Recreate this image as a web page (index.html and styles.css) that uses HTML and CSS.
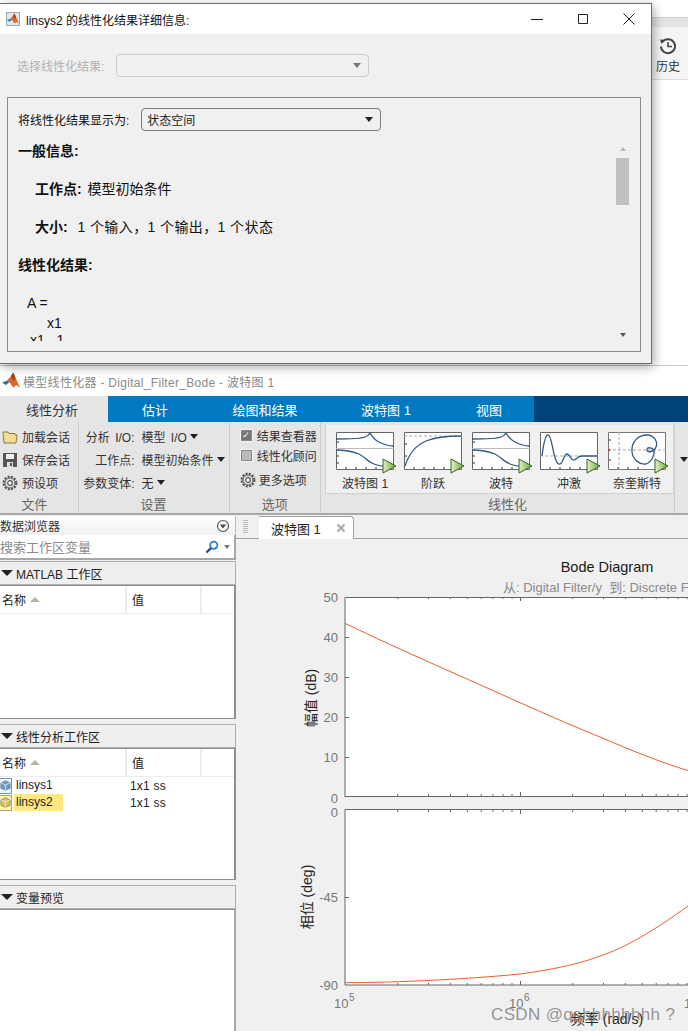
FILE: index.html
```html
<!DOCTYPE html>
<html>
<head>
    <meta charset="UTF-8">
    <title>模型线性化器</title>
    <link rel="stylesheet" href="styles.css">
</head>
<body>
    <svg class="sprite" width="0" height="0">
        <defs>
            <linearGradient id="playFill" x1="0" y1="0" x2="1" y2="0">
                <stop offset="0" stop-color="#e4efc8"/>
                <stop offset="1" stop-color="#6fa52f"/>
            </linearGradient>
            <symbol id="matlab" viewBox="0 0 16 16">
                <path d="M0 9.5 4.5 7.5 6.5 9 3.5 11.5Z" fill="#2f6fa8"/>
                <path d="M4.5 7.5 8 3.5 10 0.5 12 5 16 14 12.5 11.5 10 14 7 9.5 6.5 9Z" fill="#d9662a"/>
                <path d="M8 3.5 10 0.5 12 5 10 8Z" fill="#a63f14"/>
            </symbol>
            <symbol id="gear" viewBox="0 0 16 16">
                <circle cx="8" cy="8" r="6.2" fill="none" stroke="#555" stroke-width="2.4" stroke-dasharray="2 1.25"/>
                <circle cx="8" cy="8" r="5" fill="#e0e0e0" stroke="#666" stroke-width="1"/>
                <circle cx="8" cy="8" r="2.3" fill="#fff" stroke="#555" stroke-width="1.2"/>
            </symbol>
            <symbol id="play" viewBox="0 0 15 16">
                <path d="M1 1 14 8 1 15Z" fill="url(#playFill)" stroke="#35662a" stroke-width="1"/>
            </symbol>
            <symbol id="cube" viewBox="0 0 12 12">
                <path d="M6 1 11 3.2V9L6 11 1 9V3.2Z" fill="currentColor" stroke="#666" stroke-width=".7"/>
                <path d="M1 3.2 6 5.4 11 3.2M6 5.4V11" fill="none" stroke="#fff" stroke-width=".7"/>
            </symbol>
            <symbol id="bodeThumb" viewBox="0 0 58 38">
                <path d="M.5.5H57.5V37.5H.5Z" fill="#fff" stroke="#666"/>
                <path d="M0 16.5H58" stroke="#bbb"/>
                <path d="M0 7C12 7 24 7 29 5 32 4 33 2 34 1 36 4 38 8 43 10 47 12 52 14 57 14" fill="none" stroke="#34597f" stroke-width="1.3"/>
                <path d="M0 18C10 18 18 20 23 22 29 25 32 30 38 32 43 34 48 35 57 35" fill="none" stroke="#34597f" stroke-width="1.3"/>
                <path d="M.5 24H3M.5 31H3M.5 10H3M10 37V35M20 37V35M30 37V35M40 37V35M50 37V35" stroke="#333"/>
            </symbol>
            <symbol id="stepThumb" viewBox="0 0 58 38">
                <path d="M.5.5H57.5V37.5H.5Z" fill="#fff" stroke="#666"/>
                <path d="M0 4H58" stroke="#aaa" stroke-dasharray="3 2"/>
                <path d="M1 34C5 22 12 13 22 9 32 5 44 4 57 4" fill="none" stroke="#34597f" stroke-width="1.3"/>
                <path d="M.5 12H3M.5 24H3M10 37V35M20 37V35M30 37V35M40 37V35M50 37V35" stroke="#333"/>
            </symbol>
            <symbol id="impulseThumb" viewBox="0 0 58 38">
                <path d="M.5.5H57.5V37.5H.5Z" fill="#fff" stroke="#666"/>
                <path d="M0 24H58" stroke="#aaa" stroke-dasharray="3 2"/>
                <path d="M2 24C4 8 6 3 8 3 11 3 12 14 14 22 16 30 18 33 20 32 23 31 24 22 27 22 30 22 31 29 34 28 37 27 38 24 42 24H57" fill="none" stroke="#34597f" stroke-width="1.3"/>
                <path d="M10 37V35M20 37V35M30 37V35M40 37V35M50 37V35" stroke="#333"/>
            </symbol>
            <symbol id="nyquistThumb" viewBox="0 0 58 38">
                <rect x=".5" y=".5" width="57" height="37" fill="#fff"/>
                <path d="M.5 37.5V.5H57.5V37.5H.5" fill="none" stroke="#777"/>
                <path d="M0 18H58M11 0V38" stroke="#aaa" stroke-dasharray="3 2"/>
                <path d="M0 18H2" stroke="#e22" stroke-width="2"/>
                <path d="M38 32C32 33 25 28 24 20 23 9 31 3 39 3 47 3 50 11 48 15 46 20 40 21 39 18 38 15 44 15 46 18 47 22 44 30 38 32Z" fill="none" stroke="#34597f" stroke-width="1.3"/>
                <path d="M.5 8H3M.5 28H3M10 37V35M20 37V35M30 37V35" stroke="#333"/>
            </symbol>
        </defs>
    </svg>

    <!-- window behind the dialog -->
    <div class="back-window">
        <div class="back-strip">
            <div class="history">
                <svg class="history-icon" viewBox="0 0 18 18">
                    <path d="M3.4 5A7 7 0 1 1 2 9.5" fill="none" stroke="#444" stroke-width="2"/>
                    <path d="M1 2.5 6 3 2.5 7Z" fill="#444"/>
                    <path d="M9 5V9.5H13" fill="none" stroke="#444" stroke-width="1.6"/>
                </svg>
                <span>历史</span>
            </div>
        </div>
    </div>

    <div class="model-window">
        <div class="app-title">
            <svg class="app-logo"><use href="#matlab"/></svg>
            <span>模型线性化器 - Digital_Filter_Bode - 波特图 1</span>
        </div>

        <div class="tabs">
            <div class="tab active tab-a">线性分析</div>
            <div class="tab tab-b">估计</div>
            <div class="tab tab-c">绘图和结果</div>
            <div class="tab tab-d">波特图 1</div>
            <div class="tab tab-e">视图</div>
            <div class="tab-rest"></div>
        </div>

        <div class="ribbon">
            <div class="section sec-file">
                <div class="section-body file-list">
                    <div class="cmd">
                        <svg class="cmd-icon" viewBox="0 0 16 16"><path d="M1 3H6L7 4.5H13V6H15L14 14H2L1 3Z" fill="#f3dc93" stroke="#8a7a45"/></svg>
                        加载会话
                    </div>
                    <div class="cmd">
                        <svg class="cmd-icon" viewBox="0 0 16 16"><path d="M1 1H15V15H1Z" fill="#555"/><path d="M4 2H12V7H4Z" fill="#eee"/><path d="M5 10H11V15H5Z" fill="#ddd"/><path d="M8 11H10V14H8Z" fill="#555"/></svg>
                        保存会话
                    </div>
                    <div class="cmd">
                        <svg class="cmd-icon"><use href="#gear"/></svg>
                        预设项
                    </div>
                </div>
                <div class="section-label label-file">文件</div>
            </div>

            <div class="section sec-setup">
                <div class="section-body setup-grid">
                    <span class="setup-key">分析 I/O:</span><span class="drop">模型 I/O<i class="caret"></i></span>
                    <span class="setup-key">工作点:</span><span class="drop">模型初始条件<i class="caret"></i></span>
                    <span class="setup-key">参数变体:</span><span class="drop">无<i class="caret"></i></span>
                </div>
                <div class="section-label">设置</div>
            </div>

            <div class="section sec-options">
                <div class="section-body option-list">
                    <div class="cmd"><span class="check on">✓</span>结果查看器</div>
                    <div class="cmd"><span class="check"></span>线性化顾问</div>
                    <div class="cmd cmd-more"><svg class="cmd-icon"><use href="#gear"/></svg>更多选项</div>
                </div>
                <div class="section-label">选项</div>
            </div>

            <div class="section sec-linear">
                <div class="gallery">
                    <div class="thumb"><div class="thumb-pic"><svg class="thumb-svg"><use href="#bodeThumb"/></svg><svg class="thumb-play"><use href="#play"/></svg></div><span>波特图 1</span></div>
                    <div class="thumb"><div class="thumb-pic"><svg class="thumb-svg"><use href="#stepThumb"/></svg><svg class="thumb-play"><use href="#play"/></svg></div><span>阶跃</span></div>
                    <div class="thumb"><div class="thumb-pic"><svg class="thumb-svg"><use href="#bodeThumb"/></svg><svg class="thumb-play"><use href="#play"/></svg></div><span>波特</span></div>
                    <div class="thumb"><div class="thumb-pic"><svg class="thumb-svg"><use href="#impulseThumb"/></svg><svg class="thumb-play"><use href="#play"/></svg></div><span>冲激</span></div>
                    <div class="thumb"><div class="thumb-pic"><svg class="thumb-svg"><use href="#nyquistThumb"/></svg><svg class="thumb-play"><use href="#play"/></svg></div><span>奈奎斯特</span></div>
                </div>
                <div class="section-label label-linear">线性化</div>
            </div>

            <div class="section sec-more">
                <div class="more-body"><i class="caret"></i></div>
            </div>
        </div>

        <div class="workspace">
            <div class="browser">
                <div class="browser-title">
                    <span>数据浏览器</span>
                    <svg class="circle-down" viewBox="0 0 14 14"><circle cx="7" cy="7" r="5.5" fill="#fafafa" stroke="#555" stroke-width="1.2"/><path d="M3.8 5.5H10.2L7 9.5Z" fill="#444"/></svg>
                </div>
                <div class="search">
                    <span>搜索工作区变量</span>
                    <svg class="search-icon" viewBox="0 0 14 14"><circle cx="8.8" cy="5.2" r="3.6" fill="#fff" stroke="#2a7fd0" stroke-width="1.8"/><path d="M6 8 1.5 12.5" stroke="#1c4f9c" stroke-width="2.4"/></svg>
                    <i class="caret caret-gray"></i>
                </div>

                <div class="panel-head"><i class="caret caret-big"></i>MATLAB 工作区</div>
                <div class="table table-one">
                    <div class="table-head">
                        <div class="col-name">名称<i class="sort-up"></i></div>
                        <div class="col-value">值</div>
                        <div class="col-blank"></div>
                    </div>
                </div>

                <div class="panel-head panel-gap"><i class="caret caret-big"></i>线性分析工作区</div>
                <div class="table table-two">
                    <div class="table-head">
                        <div class="col-name">名称<i class="sort-up"></i></div>
                        <div class="col-value">值</div>
                        <div class="col-blank"></div>
                    </div>
                    <div class="table-row">
                        <span class="var-icon var-blue"><svg><use href="#cube"/></svg></span>
                        <span class="var-name">linsys1</span>
                        <span class="var-value">1x1 ss</span>
                    </div>
                    <div class="table-row">
                        <span class="var-icon var-yellow"><svg><use href="#cube"/></svg></span>
                        <span class="var-name selected">linsys2</span>
                        <span class="var-value">1x1 ss</span>
                    </div>
                </div>

                <div class="panel-head panel-gap"><i class="caret caret-big"></i>变量预览</div>
                <div class="preview"></div>
            </div>

            <div class="document">
                <div class="doc-tabs">
                    <div class="grip"></div>
                    <div class="doc-tab">
                        <span>波特图 1</span>
                        <svg class="doc-close" viewBox="0 0 10 10"><path d="M1.5 1.5 8.5 8.5M8.5 1.5 1.5 8.5" stroke="#aaa" stroke-width="2.2"/></svg>
                    </div>
                </div>

                <svg class="plot" viewBox="236 539 452 492">
                    <text class="plot-title" x="607" y="572" text-anchor="middle">Bode Diagram</text>
                    <text class="plot-sub" x="503" y="592">从: Digital Filter/y  到: Discrete Filter</text>

                    <rect x="345" y="597.5" width="350" height="199" fill="#fff"/>
                    <path d="M345 797V597.5H695M345 796.5H695" fill="none" stroke="#666"/>
                    <path d="M345 637.5H349M345 677.5H349M345 717.5H349M345 757.5H349" stroke="#666"/>
                    <path d="M397.7 597V599M428.5 597V599M450.4 597V599M467.3 597V599M481.2 597V599M492.9 597V599M503 597V599M512 597V599M520.5 597V601M572.7 597V599M603.5 597V599M625.4 597V599M642.3 597V599M656.2 597V599M667.9 597V599M678 597V599M687 597V599" stroke="#666"/>
                    <path d="M397.7 796V794M428.5 796V794M450.4 796V794M467.3 796V794M481.2 796V794M492.9 796V794M503 796V794M512 796V794M520.5 796V792M572.7 796V794M603.5 796V794M625.4 796V794M642.3 796V794M656.2 796V794M667.9 796V794M678 796V794M687 796V794" stroke="#666"/>
                    <path d="M345 623.3C400 650 470 680 520 702.7 550 716 580 729 600 737 630 750 660 762 688 770.6" fill="none" stroke="#e8602c" stroke-width="1"/>
                    <text class="tick" x="338" y="602" text-anchor="end">50</text>
                    <text class="tick" x="338" y="642" text-anchor="end">40</text>
                    <text class="tick" x="338" y="682" text-anchor="end">30</text>
                    <text class="tick" x="338" y="722" text-anchor="end">20</text>
                    <text class="tick" x="338" y="762" text-anchor="end">10</text>
                    <text class="tick" x="338" y="803" text-anchor="end">0</text>
                    <text class="axis-label" transform="translate(316 698) rotate(-90)" text-anchor="middle">幅值 (dB)</text>

                    <rect x="345" y="810" width="350" height="175" fill="#fff"/>
                    <path d="M345 985V809.5H695M345 985H695" fill="none" stroke="#666" stroke-width="1"/>
                    <path d="M345 897.5H349" stroke="#666"/>
                    <path d="M397.7 810V812M428.5 810V812M450.4 810V812M467.3 810V812M481.2 810V812M492.9 810V812M503 810V812M512 810V812M520.5 810V814M572.7 810V812M603.5 810V812M625.4 810V812M642.3 810V812M656.2 810V812M667.9 810V812M678 810V812M687 810V812" stroke="#666"/>
                    <path d="M397.7 985V983M428.5 985V983M450.4 985V983M467.3 985V983M481.2 985V983M492.9 985V983M503 985V983M512 985V983M520.5 985V981M572.7 985V983M603.5 985V983M625.4 985V983M642.3 985V983M656.2 985V983M667.9 985V983M678 985V983M687 985V983" stroke="#666"/>
                    <path d="M345 982.7C400 982.5 470 979 520 974 550 970 580 964 600 956 625 948 655 930 688 906" fill="none" stroke="#e8602c" stroke-width="1"/>
                    <text class="tick" x="338" y="817" text-anchor="end">0</text>
                    <text class="tick" x="338" y="902" text-anchor="end">-45</text>
                    <text class="tick" x="338" y="990" text-anchor="end">-90</text>
                    <text class="axis-label" transform="translate(312 897) rotate(-90)" text-anchor="middle">相位 (deg)</text>

                    <text class="tick" x="334" y="1008">10</text><text class="tick-exp" x="349" y="1001">5</text>
                    <text class="tick" x="509" y="1008">10</text><text class="tick-exp" x="524" y="1001">6</text>
                    <text class="tick" x="684" y="1008">10</text>
                    <text class="axis-label" x="607" y="1024" text-anchor="middle">频率 (rad/s)</text>
                </svg>
            </div>
        </div>
    </div>

    <div class="watermark">CSDN @qshhhhhhhh ?</div>

    <!-- details dialog on top -->
    <div class="dialog">
        <div class="dialog-title">
            <span class="dialog-logo"><svg><use href="#matlab"/></svg></span>
            <span class="dialog-name">linsys2 的线性化结果详细信息:</span>
            <svg class="win-btn" viewBox="0 0 12 12"><path d="M0 6.5H12" stroke="#222"/></svg>
            <svg class="win-btn" viewBox="0 0 12 12"><path d="M1.5 1.5H10.5V10.5H1.5Z" fill="none" stroke="#222"/></svg>
            <svg class="win-btn win-close" viewBox="0 0 12 12"><path d="M.5.5 11.5 11.5M11.5.5.5 11.5" stroke="#222"/></svg>
        </div>
        <div class="dialog-body">
            <div class="result-row">
                <span class="result-label">选择线性化结果:</span>
                <div class="combo combo-off"><i class="caret caret-gray"></i></div>
            </div>
            <div class="group">
                <div class="display-row">
                    <span>将线性化结果显示为:</span>
                    <div class="combo combo-on"><span>状态空间</span><i class="caret"></i></div>
                </div>
                <div class="details">
                    <div class="line"><b>一般信息:</b></div>
                    <div class="line indent"><b>工作点:</b> <span class="point-text">模型初始条件</span></div>
                    <div class="line indent"><b>大小:</b>&nbsp; <span class="size-text">1 个输入，1 个输出，1 个状态</span></div>
                    <div class="line"><b>线性化结果:</b></div>
                    <div class="line code-a">A =</div>
                    <div class="code code-x">x1</div>
                    <div class="code code-y">x1&nbsp;&nbsp;&nbsp;1</div>
                </div>
                <div class="scroll">
                    <i class="scroll-up"></i>
                    <div class="scroll-thumb"></div>
                    <i class="scroll-down"></i>
                </div>
            </div>
        </div>
    </div>
</body>
</html>
```

FILE: styles.css
```css
html, body {
    margin: 0;
    height: 100%;
}

body {
    position: relative;
    width: 688px;
    height: 1031px;
    overflow: hidden;
    background: #fff;
    color: #222;
    font-family: "Liberation Sans", "Noto Sans CJK SC", sans-serif;
    font-size: 12px;
}

.sprite {
    position: absolute;
}

.caret {
    display: inline-block;
    width: 0;
    height: 0;
    border-left: 4px solid transparent;
    border-right: 4px solid transparent;
    border-top: 5px solid #222;
}

.caret-gray {
    border-top-color: #777;
}

.caret-big {
    border-left-width: 6px;
    border-right-width: 6px;
    border-top-width: 6px;
    margin: 0 3px 0 1px;
}

/* back window */
.back-window {
    height: 366px;
    padding-top: 17px;
    border-bottom: 1px solid #c8c8c8;
    box-sizing: border-box;
}

.back-strip {
    height: 63px;
    box-sizing: border-box;
    padding-top: 9px;
    display: flex;
    justify-content: flex-end;
    background: linear-gradient(#e4e4e4 0, #e4e4e4 9px, #f5f5f5 9px);
    border-top: 1px solid #d0d0d0;
    border-bottom: 1px solid #dcdcdc;
}

.history {
    width: 36px;
    padding-right: 4px;
    box-sizing: border-box;
    display: flex;
    flex-direction: column;
    align-items: center;
    gap: 2px;
    color: #333;
}

.history-icon {
    width: 18px;
    height: 18px;
    margin-top: 10px;
}

/* main window */
.model-window {
    display: flex;
    flex-direction: column;
    height: 665px;
}

.app-title {
    height: 30px;
    flex: none;
    display: flex;
    align-items: center;
    gap: 3px;
    padding: 0 0 0 2px;
    color: #8a8a8a;
    letter-spacing: .3px;
}

.app-logo {
    width: 18px;
    height: 18px;
}

.tabs {
    display: flex;
    flex: none;
    height: 26px;
    background: #0079c1;
    color: #fff;
    font-size: 13px;
}

.tab {
    display: flex;
    align-items: center;
    justify-content: center;
}

.tab.active {
    background: #e6e6e6;
    color: #333;
    padding-right: 4px;
    box-sizing: border-box;
}

.tab-a { width: 108px; }
.tab-b { width: 94px; }
.tab-c { width: 126px; }
.tab-d { width: 116px; }
.tab-e { width: 90px; }

.tab-rest {
    flex: 1;
    background: #004378;
}

.ribbon {
    display: flex;
    flex: none;
    height: 93px;
    background: #e5e5e5;
    border-bottom: 2px solid #a8a8a8;
    box-sizing: border-box;
    color: #333;
}

.section {
    display: flex;
    flex-direction: column;
    border-right: 1px solid #cfcfcf;
    box-sizing: border-box;
}

.sec-file { width: 79px; }
.sec-setup { width: 152px; }
.sec-options { width: 92px; }
.sec-linear { width: 356px; padding-left: 4px; }
.sec-more { flex: 1; border-right: 0; }

.section-body {
    height: 71px;
    padding-top: 3px;
    box-sizing: border-box;
}

.section-label {
    flex: 1;
    display: flex;
    align-items: center;
    justify-content: center;
    font-size: 13px;
    color: #666;
}

.label-file {
    padding-right: 9px;
}

.label-linear {
    padding-left: 16px;
}

.file-list {
    padding-left: 2px;
}

.cmd {
    height: 23px;
    display: flex;
    align-items: center;
    gap: 4px;
}

.cmd-icon {
    width: 16px;
    height: 16px;
    flex: none;
}

.setup-grid {
    display: grid;
    grid-template-columns: 56px auto;
    column-gap: 7px;
    grid-auto-rows: 23px;
    align-items: center;
    padding-left: 0;
}

.setup-key {
    text-align: right;
    white-space: nowrap;
    word-spacing: 2px;
}

.drop {
    display: flex;
    align-items: center;
    gap: 3px;
    white-space: nowrap;
    word-spacing: 2px;
}

.option-list {
    padding-left: 11px;
    padding-top: 3px;
}

.option-list .cmd {
    height: 20px;
}

.cmd-more {
    margin-top: 3px;
    gap: 3px;
    margin-left: -1px;
}

.option-list .cmd-more {
    height: 23px;
}

.check {
    width: 9px;
    height: 9px;
    flex: none;
    background: #bbb;
    border: 1px solid #888;
    box-shadow: 0 0 0 1px #f4f4f4;
    font-size: 9px;
    line-height: 9px;
    text-align: center;
    color: #fff;
    margin-right: 1px;
    font-family: "DejaVu Sans", sans-serif;
}

.check.on {
    background: #777;
}

.gallery {
    height: 69px;
    margin-top: 3px;
    padding: 7px 0 0 10px;
    box-sizing: border-box;
    display: flex;
    gap: 10px;
    background: #f0f0f0;
    border-left: 1px solid #d0d0d0;
    border-right: 1px solid #d0d0d0;
    border-bottom: 1px solid #cfcfcf;
}

.thumb {
    width: 58px;
    display: flex;
    flex-direction: column;
    align-items: center;
    gap: 4px;
    color: #333;
    white-space: nowrap;
}

.thumb-pic {
    position: relative;
    width: 58px;
    height: 38px;
}

.thumb-svg {
    display: block;
    width: 58px;
    height: 38px;
}

.thumb-play {
    position: absolute;
    right: -3px;
    bottom: -4px;
    width: 15px;
    height: 16px;
}

.more-body {
    height: 69px;
    margin-top: 3px;
    display: flex;
    align-items: center;
    padding-left: 5px;
    background: #e5e5e5;
}

.workspace {
    flex: 1;
    display: flex;
    min-height: 0;
    background: #f0f0f0;
}

.browser {
    width: 236px;
    flex: none;
    display: flex;
    flex-direction: column;
    background: #f0f0f0;
}

.browser-title {
    height: 19px;
    margin-top: 1px;
    flex: none;
    display: flex;
    align-items: center;
    justify-content: space-between;
    padding-right: 5px;
    background: linear-gradient(#fff, #f0f0f0);
    border-right: 1px solid #bbb;
    color: #333;
}

.circle-down {
    width: 14px;
    height: 14px;
}

.search {
    height: 25px;
    flex: none;
    display: flex;
    align-items: center;
    gap: 5px;
    background: #fff;
    border-bottom: 2px solid #a8a8a8;
    border-right: 2px solid #a8a8a8;
    box-sizing: border-box;
    color: #8a8a8a;
    font-size: 13px;
    padding-right: 4px;
}

.search span {
    flex: 1;
}

.search-icon {
    width: 14px;
    height: 14px;
}

.search .caret {
    border-left-width: 3px;
    border-right-width: 3px;
    border-top-width: 4px;
}

.panel-head {
    height: 24px;
    flex: none;
    box-sizing: border-box;
    margin-top: 1px;
    display: flex;
    align-items: center;
    background: #efefef;
    border: 1px solid #aeaeae;
    border-left: 0;
    color: #222;
}

.panel-gap {
    margin-top: 5px;
}

.table {
    flex: none;
    background: #fff;
    border: 1px solid #8f8f8f;
    border-left: 0;
    border-right-width: 2px;
    box-sizing: border-box;
}

.table-one { height: 134px; }
.table-two { height: 132px; }

.table-head {
    display: flex;
    height: 28px;
    border-bottom: 1px solid #ececec;
    box-sizing: border-box;
}

.col-name,
.col-value {
    display: flex;
    align-items: center;
    padding-left: 2px;
    box-sizing: border-box;
    border-right: 2px solid #ececec;
}

.col-name { width: 127px; gap: 4px; }
.col-value { width: 75px; padding-left: 5px; }
.col-blank { flex: 1; }

.sort-up {
    width: 0;
    height: 0;
    border-left: 5px solid transparent;
    border-right: 5px solid transparent;
    border-bottom: 5px solid #b5b5a5;
}

.table-row {
    height: 17px;
    display: flex;
    align-items: center;
    color: #222;
}

.var-icon {
    width: 12px;
    height: 16px;
    flex: none;
    box-sizing: border-box;
    border: 1px solid #6f98c0;
    border-left: 0;
    display: flex;
    align-items: center;
}

.var-icon svg {
    width: 11px;
    height: 11px;
}

.var-blue { color: #6f9ccc; background: #eef4fa; }
.var-yellow { color: #d6c25a; background: #fff3b0; border-color: #b5a55a; }

.var-name {
    width: 49px;
    height: 17px;
    line-height: 17px;
    padding-left: 2px;
    margin-right: 67px;
    box-sizing: border-box;
    margin-left: 2px;
}

.selected {
    background: #ffe97f;
}

.var-value {
    white-space: pre;
    letter-spacing: .2px;
}

.preview {
    flex: 1;
    background: #fff;
    border-right: 2px solid #a8a8a8;
    border-top: 1px solid #8f8f8f;
}

.document {
    flex: 1;
    display: flex;
    flex-direction: column;
    min-width: 0;
}

.doc-tabs {
    height: 24px;
    flex: none;
    display: flex;
    box-sizing: border-box;
    padding-top: 1px;
    border-bottom: 1px solid #a0a0a0;
}

.grip {
    width: 5px;
    height: 13px;
    margin: 4px 0 0 7px;
    background: repeating-linear-gradient(#bbb 0 1px, transparent 1px 2px);
}

.doc-tab {
    width: 95px;
    height: 23px;
    margin-left: 11px;
    box-sizing: border-box;
    padding: 0 7px 0 12px;
    display: flex;
    align-items: center;
    justify-content: space-between;
    background: #fff;
    border: 1px solid #a0a0a0;
    border-bottom: 0;
    border-left: 0;
    border-radius: 0 4px 0 0;
    color: #222;
    font-size: 13px;
}

.doc-close {
    width: 10px;
    height: 10px;
}

.plot {
    width: 452px;
    height: 492px;
    display: block;
    background: #f0f0f0;
}

.plot text {
    font-family: "Liberation Sans", "Noto Sans CJK SC", sans-serif;
}

.plot-title {
    font-size: 14.5px;
    fill: #1a1a1a;
}

.plot-sub {
    font-size: 13px;
    fill: #8a8a8a;
    white-space: pre;
}

.tick {
    font-size: 13px;
    fill: #777;
}

.tick-exp {
    font-size: 10px;
    fill: #777;
}

.axis-label {
    font-size: 14px;
    fill: #262626;
}

.watermark {
    position: absolute;
    left: 491px;
    top: 1004px;
    font-size: 17px;
    line-height: 22px;
    white-space: nowrap;
    color: rgba(110, 110, 110, 0.72);
    letter-spacing: .35px;
}

/* dialog */
.dialog {
    position: absolute;
    left: 0;
    top: 3px;
    width: 652px;
    height: 361px;
    box-sizing: border-box;
    display: flex;
    flex-direction: column;
    background: #f0f0f0;
    border: 1px solid #6f6f6f;
    border-left: 0;
    box-shadow: 2px 3px 10px rgba(0, 0, 0, 0.35);
}

.dialog-title {
    height: 30px;
    flex: none;
    display: flex;
    align-items: center;
    background: #fff;
    color: #111;
}

.dialog-logo {
    width: 14px;
    height: 14px;
    box-sizing: border-box;
    margin: 0 6px 0 6px;
    border: 1px solid #9ab;
    background: #dfe6ee;
    flex: none;
}

.dialog-logo svg {
    display: block;
    width: 12px;
    height: 12px;
}

.dialog-name {
    flex: 1;
}

.win-btn {
    width: 12px;
    height: 12px;
    margin-right: 34px;
    flex: none;
}

.win-close {
    margin-right: 16px;
}

.dialog-body {
    flex: 1;
    padding: 20px 10px 11px 7px;
    display: flex;
    flex-direction: column;
    min-height: 0;
}

.result-row {
    height: 23px;
    flex: none;
    display: flex;
    align-items: center;
    color: #b2b2b2;
    padding-left: 10px;
}

.result-label {
    width: 99px;
}

.combo {
    display: flex;
    align-items: center;
    justify-content: space-between;
    box-sizing: border-box;
    height: 23px;
    border-radius: 4px;
    padding: 0 7px 0 5px;
}

.combo-off {
    width: 253px;
    justify-content: flex-end;
    border: 1px solid #cbcbcb;
}

.combo-on {
    width: 240px;
    border: 1px solid #7a7a7a;
    background: #f0f0f0;
    color: #222;
}

.group {
    position: relative;
    flex: 1;
    margin-top: 20px;
    border: 1px solid #8c8c8c;
    box-sizing: border-box;
    padding: 10px 10px 0;
    overflow: hidden;
    min-height: 0;
    color: #111;
}

.display-row {
    display: flex;
    align-items: center;
    gap: 12px;
    height: 23px;
}

.details {
    height: 210px;
    padding-top: 1px;
    box-sizing: border-box;
    overflow: hidden;
    font-size: 14px;
}

.point-text {
    margin-left: 2px;
}

.size-text {
    margin-left: 2px;
    letter-spacing: .4px;
}

.line {
    height: 38px;
    line-height: 38px;
    white-space: nowrap;
}

.indent {
    padding-left: 17px;
}

.code-a {
    padding-left: 9px;
}

.code {
    height: 16px;
    line-height: 16px;
    white-space: nowrap;
}

.code-x {
    margin-top: -7px;
    padding-left: 29px;
}

.code-y {
    padding-left: 12px;
    margin-top: 1px;
}

.scroll {
    position: absolute;
    right: 11px;
    top: 49px;
    width: 13px;
    height: 190px;
    display: flex;
    flex-direction: column;
    align-items: center;
}

.scroll-up {
    width: 0;
    height: 0;
    border-left: 3px solid transparent;
    border-right: 3px solid transparent;
    border-bottom: 4px solid #b5b5b5;
}

.scroll-thumb {
    width: 13px;
    height: 47px;
    margin-top: 7px;
    background: #c0c0c0;
}

.scroll-down {
    width: 0;
    height: 0;
    margin-top: auto;
    border-left: 3px solid transparent;
    border-right: 3px solid transparent;
    border-top: 4px solid #555;
}
```
